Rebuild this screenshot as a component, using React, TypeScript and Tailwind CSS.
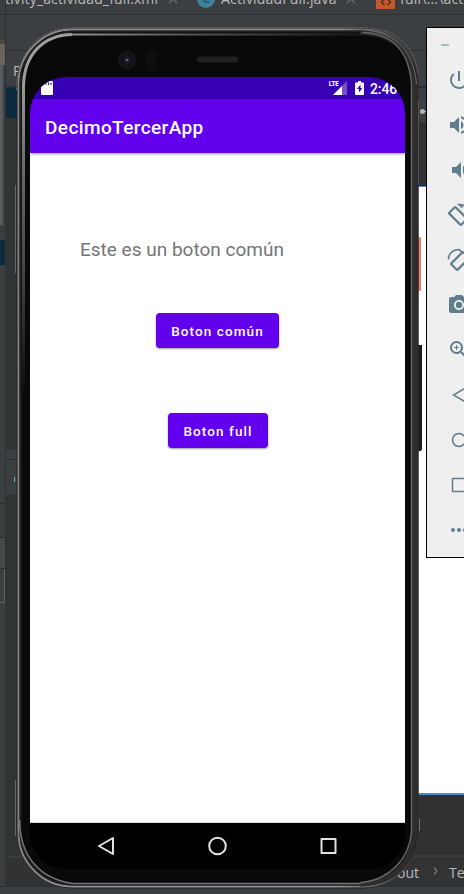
import React from "react";
import { MdPowerSettingsNew, MdVolumeUp, MdVolumeDown, MdPhotoCamera, MdZoomIn } from "react-icons/md";

const uiFont = "font-['Open_Sans','Noto_Sans',sans-serif]";
const deviceFont = "font-[Roboto,sans-serif]";

function TabBar() {
  return (
    <div className="flex h-[14px] shrink-0 bg-[#3c3f41]">
      <div className="h-full w-[5px] shrink-0" />
      <div className="h-full w-px shrink-0 bg-[#2f3233]" />
      <div className="-mt-[11px] flex h-[20px] w-[458px] items-center whitespace-nowrap text-[14px] leading-[20px] text-[#bbbbbb]">
        <span className="-ml-px w-[163px] shrink-0 tracking-[0.14px]">tivity_actividad_full.xml</span>
        <CloseMark />
        <span className="ml-[19px] flex h-[18px] w-[18px] shrink-0 items-center justify-center rounded-full bg-[#3d83a0] text-[12px] font-bold text-[#24576b]">C</span>
        <span className="ml-[6px] w-[125px] shrink-0 tracking-[0.2px]">ActividadFull.java</span>
        <CloseMark />
        <span className="ml-[20px] flex h-[20px] w-[19px] shrink-0 items-end justify-center bg-[#c4582c]">
          <svg className="mb-[3px]" width="12" height="8" viewBox="0 0 12 8" fill="none" stroke="#51301f" strokeWidth="1.5">
            <path d="M4.500 1 1.500 4l3 3M7.500 1l3 3-3 3" />
          </svg>
        </span>
        <span className="ml-[5px] tracking-[0.2px]">full\...\activity</span>
      </div>
    </div>
  );
}

function CloseMark() {
  return (
    <svg className="shrink-0" width="10" height="10" viewBox="0 0 10 10" stroke="#6b6e70" strokeWidth="1.2">
      <path d="M1 1l8 8M9 1 1 9" />
    </svg>
  );
}

function LeftRail() {
  return (
    <div className="flex w-[5px] shrink-0 flex-col bg-[#3c3f41]">
      <div className="h-[25px]" />
      <div className="h-[4px] bg-[#4b483f]" />
      <div className="h-[21px] bg-[#6a645a]" />
      <div className="h-[160px] w-[3px] bg-[#595b5d]" />
      <div className="h-[15px]" />
      <div className="h-[25px] bg-[#0d293e]" />
      <div className="h-[238px]" />
      <div className="h-px bg-[#2b2d2e]" />
      <div className="h-[33px]" />
      <div className="h-px bg-[#2b2d2e]" />
      <div className="h-[30px] bg-[#45494a]" />
      <div className="h-px bg-[#2b2d2e]" />
      <div className="h-[34px] border-r border-b border-[#646464]" />
    </div>
  );
}

function EditorLeft() {
  return (
    <div className="flex w-[220px] shrink-0 flex-col bg-[#313435]">
      <div className="h-[35px] bg-[#3c3f41]" />
      <div className="h-px bg-[#2e3132]" />
      <div className="h-[35px] bg-[#3c3f41] pl-[7px] pt-[10px] text-[14px] leading-[20px] text-[#bbbbbb]">P</div>
      <div className="h-[2px] bg-[#2e3132]" />
      <div className="h-[30px] bg-[#0d293e]" />
      <div className="h-[332px]" />
      <div className="h-[9px] bg-[#3c3f41]" />
      <div className="h-px bg-[#2e3132]" />
      <div className="flex h-[35px] items-center bg-[#3c3f41] pl-[8px] pt-[3px]">
        <div className="h-[5px] w-px bg-[#6eb3c4]" />
      </div>
      <div className="flex-1" />
      <div className="h-[2px] bg-[#3a3c3d]" />
      <div className="h-[28px] bg-[#303234]" />
    </div>
  );
}

function EditorRight() {
  return (
    <div className="flex flex-1 flex-col bg-[#2f3132]">
      <div className="h-[35px] bg-[#3c3f41]" />
      <div className="h-px bg-[#2e3132]" />
      <div className="h-[35px] bg-[#3c3f41]" />
      <div className="h-[2px] bg-[#2a2c2d]" />
      <div className="flex h-[35px] items-center bg-[#3c3f41] pl-[194px]">
        <div className="mt-[11px] h-[5px] w-[5px] rounded-full bg-[#b4b4b4]" />
        <div className="mt-[11px] h-px w-4 bg-[#b4b4b4]" />
      </div>
      <div className="h-px bg-[#2a2c2d]" />
      <div className="h-[62px] bg-[#2f3031]" />
      <div className="h-[609px] border-b-2 border-t border-[#4a90d0] bg-white" />
      <div className="h-[60px]" />
      <div className="h-[2px] bg-[#3a3c3d]" />
      <div className={"flex h-[28px] items-center bg-[#313335] pl-[165px] text-[14px] text-[#bbbbbb] " + uiFont}>
        <span className="flex w-[28px] justify-end pt-[2px]">out</span>
        <svg className="ml-[14px]" width="5" height="8" viewBox="0 0 5 8" fill="none" stroke="#777a7c" strokeWidth="1.2">
          <path d="M1 .5 4 4 1 7.500" />
        </svg>
        <span className="ml-[11px] whitespace-nowrap pt-[2px]">TextView</span>
      </div>
    </div>
  );
}

function Casing() {
  return (
    <svg className="absolute inset-0" width="412" height="866" viewBox="14 25 412 866" fill="none">
      <defs>
        <linearGradient id="rim" x1="0" y1="0" x2="1" y2="0">
          <stop offset="0" stopColor="#858585" />
          <stop offset=".15" stopColor="#929094" />
          <stop offset=".8" stopColor="#929094" />
          <stop offset="1" stopColor="#353535" />
        </linearGradient>
        <linearGradient id="inner" x1="0" y1="40" x2="0" y2="400" gradientUnits="userSpaceOnUse">
          <stop offset="0" stopColor="#a0a29f" />
          <stop offset=".12" stopColor="#9b9d9b" />
          <stop offset=".35" stopColor="#696b69" />
          <stop offset=".7" stopColor="#3c3c3c" />
          <stop offset="1" stopColor="#09090a" />
        </linearGradient>
        <linearGradient id="topGlow" x1="60" y1="0" x2="370" y2="0" gradientUnits="userSpaceOnUse">
          <stop offset="0" stopColor="#999" />
          <stop offset=".35" stopColor="#5f5f5f" />
          <stop offset="1" stopColor="#161616" />
        </linearGradient>
        <radialGradient id="lens">
          <stop offset="0" stopColor="#333b4c" />
          <stop offset=".25" stopColor="#191c26" />
          <stop offset=".5" stopColor="#101114" />
          <stop offset=".8" stopColor="#171718" />
          <stop offset="1" stopColor="#0a0a0a" />
        </radialGradient>
      </defs>
      <path d="M418 237h2q1 0 1 2v50q0 2-1 2h-2z" fill="#ee7d62" />
      <path d="M418 345h4v104l-1 2h-3z" fill="#1c1b1a" />
      <rect x="16.500" y="27.500" width="402" height="861" rx="57" fill="#202122" />
      <path d="M15.500 185v88M15.500 780v56" stroke="#686b69" />
      <path d="M418.500 100v85M419.500 819v12" stroke="#727272" />
      <path d="M16.500 90C17 51 40 28 75 27.500H362C397 28 416 48 418 75" stroke="#69696b" strokeDasharray="2 1" />
      <rect x="18.500" y="29.500" width="399" height="857" rx="54" stroke="url(#rim)" strokeWidth="2" />
      <rect x="20.500" y="31.500" width="396" height="853" rx="52" fill="#09090a" stroke="#202021" strokeWidth="2" />
      <path d="M23.500 400V86C24 55 43 35 72 34.500" stroke="url(#inner)" strokeWidth="3" />
      <path d="M70 34.500H360" stroke="url(#topGlow)" strokeWidth="2" />
      <path d="M360 32.500C393 33 412 50 414.500 84V832C412 864 393 883 360 884" stroke="#2d2d2d" strokeWidth="5" />
      <path d="M362 32.500C393 33 409 52 411.500 84V832C409 860 389 880 360 883" stroke="#646464" strokeWidth="1.500" />
      <path d="M355 29.500C393 29 414 50 416.500 84" stroke="#6b6b6d" />
      <path d="M19.500 820C20 856 39 879 73 883.500H360" stroke="#77777a" strokeWidth="1.500" />
      <circle cx="127" cy="60" r="10" fill="url(#lens)" />
      <circle cx="127" cy="60" r="1" fill="#6d7688" />
      <rect x="147.500" y="50.500" width="8" height="19" rx="4" fill="#0c0c0d" stroke="#131314" />
      <path d="M148.500 54a3 3 0 1 0 6 0M148.500 65a3 3 0 1 1 6 0" stroke="#151516" />
      <rect x="197" y="56.500" width="41" height="6" rx="3" fill="#212121" />
    </svg>
  );
}

function StatusBar() {
  return (
    <div className="flex h-[22px] shrink-0 items-center bg-[#3700b3] pl-[11px] text-white">
      <svg width="12" height="14" viewBox="0 0 12 14">
        <path d="M4 0h7q1 0 1 1v12q0 1-1 1H1q-1 0-1-1V4z" fill="white" />
        <path d="M5 1.500v2.500M7.500 1.500v2.500M10 1.500v2.500" stroke="#3700b3" />
      </svg>
      <div className="flex-1" />
      <span className="mb-[8px] font-['Open_Sans',sans-serif] text-[7px] font-bold leading-[8px] tracking-[-0.8px]">LTE</span>
      <svg className="-ml-[5px]" width="14" height="14" viewBox="0 0 14 14">
        <path d="M14 0v14H0z" fill="#7a50c9" />
        <path d="M9 5v9H0z" fill="white" />
      </svg>
      <svg className="ml-[8px]" width="9" height="14" viewBox="0 0 9 14">
        <path d="M3 0h3v1.500h2q1 0 1 1V13q0 1-1 1H1q-1 0-1-1V2.500q0-1 1-1h2z" fill="white" />
        <path d="M5.500 3.500 2 8h2v3.500L7.300 7H5.500z" fill="#3700b3" />
      </svg>
      <span className="ml-[6px] w-[35px] whitespace-nowrap pt-px text-[14px] font-medium leading-[22px] tracking-[-0.1px]">2:46</span>
    </div>
  );
}

function PhoneButton({ label, size }: { label: string; size: string }) {
  return (
    <button
      className={
        "flex h-[35px] items-center justify-center rounded-[4px] bg-[#6200ee] pl-px pt-[2px] text-[13.500px] font-medium tracking-[1.1px] text-white shadow-[0_1px_2px_rgba(0,0,0,0.4)] " + size
      }
    >
      {label}
    </button>
  );
}

function Phone() {
  return (
    <div className="absolute left-[14px] top-[25px] h-[866px] w-[412px] pl-[16px] pt-[52px]">
      <Casing />
      <div className={"relative flex h-[792px] w-[375px] flex-col overflow-hidden rounded-[36px] bg-black " + deviceFont}>
        <StatusBar />
        <header className="z-10 flex h-[54px] shrink-0 items-center bg-[#6200ee] pl-[15px] pt-[4px] text-[19px] font-medium tracking-[0.4px] text-white shadow-[0_1px_3px_rgba(0,0,0,0.4)]">
          DecimoTercerApp
        </header>
        <main className="flex flex-1 flex-col bg-white">
          <p className="mt-[84px] pl-[50px] text-[19px] leading-[26px] text-[#757575]">Este es un boton común</p>
          <div className="mt-[50px] pl-[125.500px]">
            <PhoneButton label="Boton común" size="w-[123px]" />
          </div>
          <div className="mt-[65px] pl-[137.500px]">
            <PhoneButton label="Boton full" size="w-[100px]" />
          </div>
        </main>
        <nav className="flex h-[47px] shrink-0 items-center justify-between border-t border-[#d5dcdd] bg-black pl-[67px] pr-[67px]">
          <svg width="18" height="20" viewBox="0 0 18 20" fill="none" stroke="#e2e2e2" strokeWidth="2" strokeLinejoin="round">
            <path d="M16 2v16L2 10z" />
          </svg>
          <svg width="20" height="20" viewBox="0 0 20 20" fill="none" stroke="#e2e2e2" strokeWidth="2">
            <circle cx="10.500" cy="10" r="8.300" />
          </svg>
          <svg width="20" height="20" viewBox="0 0 20 20" fill="none" stroke="#e2e2e2" strokeWidth="2" strokeLinejoin="round">
            <rect x="3.500" y="3" width="14" height="14" />
          </svg>
        </nav>
      </div>
    </div>
  );
}

function RotateIcon({ flip }: { flip?: boolean }) {
  return flip ? (
    <svg width="24" height="24" viewBox="0 0 24 24" fill="none" stroke="currentColor" strokeWidth="2.200">
      <rect x="8.500" y="4.500" width="9" height="17" rx="1" transform="rotate(45 13 13)" />
      <path d="M1.500 11.500C1.500 5.500 6 1.500 12 1.500l3.500 3.200" strokeWidth="1.700" />
    </svg>
  ) : (
    <svg width="24" height="24" viewBox="0 0 24 24" fill="none" stroke="currentColor" strokeWidth="2.200">
      <rect x="6.500" y="4.500" width="9" height="17" rx="1" transform="rotate(-45 11 13)" />
      <path d="M22.500 11.500c0-6-4.500-10-10.500-10l3.500 3.200" strokeWidth="1.700" />
    </svg>
  );
}

function EmulatorToolbar() {
  const icons = [
    <MdPowerSettingsNew size={24} />,
    <MdVolumeUp size={24} />,
    <MdVolumeDown size={24} />,
    <RotateIcon />,
    <RotateIcon flip />,
    <MdPhotoCamera size={24} />,
    <MdZoomIn size={24} />,
    <svg width="24" height="24" viewBox="0 0 24 24" fill="none" stroke="currentColor" strokeWidth="1.500">
      <path d="M18.500 5v14L6.500 12z" />
    </svg>,
    <svg width="24" height="24" viewBox="0 0 24 24" fill="none" stroke="currentColor" strokeWidth="1.500">
      <circle cx="12" cy="12" r="6.500" />
    </svg>,
    <svg width="24" height="24" viewBox="0 0 24 24" fill="none" stroke="currentColor" strokeWidth="1.500">
      <rect x="5.500" y="5.500" width="13" height="13" rx=".5" />
    </svg>,
    <svg width="24" height="24" viewBox="0 0 24 24" fill="currentColor">
      <circle cx="6" cy="12" r="2" />
      <circle cx="12" cy="12" r="2" />
      <circle cx="18" cy="12" r="2" />
    </svg>,
  ];
  return (
    <aside className="absolute left-[426px] top-[27px] h-[531px] w-[70px] border border-black bg-[#efefef] text-[#607d8b]">
      <div className="ml-[14px] mt-[16px] h-[2px] w-[8px] bg-[#a9b9c0]" />
      <div className="mt-[11px] flex flex-col pl-[20px]">
        {icons.map((icon, i) => (
          <div key={i} className="flex h-[45px] items-center">{icon}</div>
        ))}
      </div>
    </aside>
  );
}

export default function App() {
  return (
    <div className={"relative flex h-[894px] w-[464px] flex-col overflow-hidden bg-[#3c3f41] " + uiFont}>
      <TabBar />
      <div className="h-px shrink-0 bg-[#2e3132]" />
      <div className="flex h-[871px] shrink-0">
        <LeftRail />
        <div className="w-px shrink-0 bg-[#2f3233]" />
        <EditorLeft />
        <EditorRight />
      </div>
      <div className="h-px shrink-0 bg-[#2d2f30]" />
      <Phone />
      <EmulatorToolbar />
    </div>
  );
}
